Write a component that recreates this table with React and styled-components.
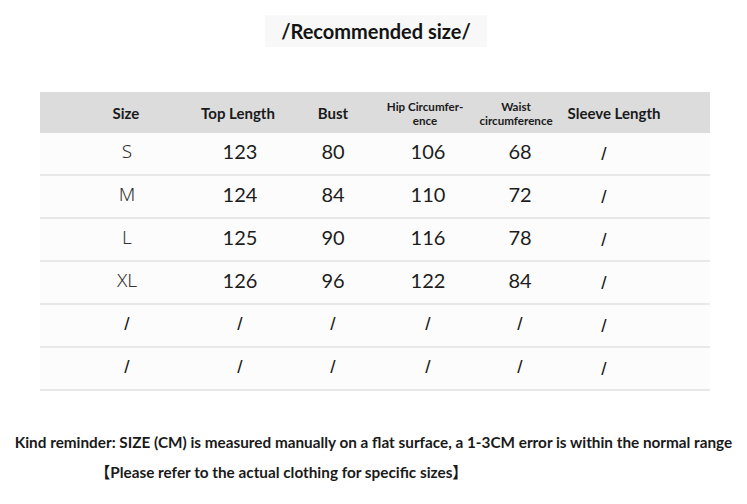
import styled, { createGlobalStyle } from "styled-components";

const GlobalStyle = createGlobalStyle`
  body {
    margin: 0;
    background: #ffffff;
    font-family: Lato, "Noto Sans CJK SC", sans-serif;
    color: #1d1d1d;
  }
`;

const Page = styled.div`
  width: 747px;
  padding-top: 15px;
`;

const TitleBox = styled.div`
  width: 222px;
  height: 32px;
  margin: 0 auto 0 265px;
  background: #f8f8f8;
  display: flex;
  align-items: center;
  justify-content: center;
  font-size: 20px;
  font-weight: 700;
  color: #141414;
`;

const Table = styled.div`
  width: 670px;
  margin: 45px 0 0 40px;
`;

const HeaderRow = styled.div`
  display: grid;
  grid-template-columns: 112px 112px 78px 106px 76px 120px 1fr;
  padding-left: 30px;
  height: 41px;
  align-items: center;
  justify-items: center;
  background: #dcdcdc;
`;

const HeadCell = styled.div`
  font-size: ${(p) => (p.$small ? "11.6px" : "15px")};
  line-height: ${(p) => (p.$small ? "14px" : "18px")};
  font-weight: 700;
  text-align: center;
  white-space: nowrap;
  color: #1a1a1a;
  margin-top: ${(p) => (p.$small ? "3px" : "1px")};
`;

const Row = styled.div`
  display: grid;
  grid-template-columns: 114px 112px 74px 116px 68px 100px 1fr;
  padding-left: 30px;
  height: 41px;
  align-items: center;
  justify-items: center;
  background: #fcfcfc;
  border-bottom: 2px solid #e8e8e8;
`;

const Cell = styled.div`
  font-size: 20px;
  font-weight: 400;
  color: #1d1d1d;
  margin-top: -6px;
`;

const SizeCell = styled(Cell)`
  font-family: "Noto Sans", sans-serif;
  font-weight: 300;
  font-size: 19px;
  color: #333;
`;

const Slash = styled(Cell)`
  font-family: "Liberation Sans", sans-serif;
  font-weight: 400;
  font-size: 19px;
  color: #161616;
  margin-top: -4px;
`;

const SleeveSlash = styled(Slash)`
  margin-top: 0;
`;

const Footer = styled.div`
  margin-top: 42px;
`;

const Note = styled.div`
  font-size: 15.3px;
  font-weight: 700;
  line-height: 19px;
  white-space: nowrap;
  color: #1a1a1a;
  text-align: ${(p) => (p.$indent ? "left" : "center")};
  padding-left: ${(p) => (p.$indent ? "95px" : "0")};
  margin-top: ${(p) => (p.$indent ? "11px" : "0")};
`;

const rows = [
  ["S", "123", "80", "106", "68"],
  ["M", "124", "84", "110", "72"],
  ["L", "125", "90", "116", "78"],
  ["XL", "126", "96", "122", "84"],
  ["/", "/", "/", "/", "/"],
  ["/", "/", "/", "/", "/"],
];

export default function App() {
  return (
    <Page>
      <GlobalStyle />
      <TitleBox>/Recommended size/</TitleBox>
      <Table>
        <HeaderRow>
          <HeadCell>Size</HeadCell>
          <HeadCell>Top Length</HeadCell>
          <HeadCell>Bust</HeadCell>
          <HeadCell $small>
            Hip Circumfer-
            <br />
            ence
          </HeadCell>
          <HeadCell $small>
            Waist
            <br />
            circumference
          </HeadCell>
          <HeadCell>Sleeve Length</HeadCell>
        </HeaderRow>
        {rows.map((r, i) => (
          <Row key={i}>
            {r.map((v, j) => {
              if (v === "/") return <Slash key={j}>/</Slash>;
              if (j === 0) return <SizeCell key={j}>{v}</SizeCell>;
              return <Cell key={j}>{v}</Cell>;
            })}
            <SleeveSlash>/</SleeveSlash>
          </Row>
        ))}
      </Table>
      <Footer>
        <Note>
          Kind reminder: SIZE (CM) is measured manually on a flat surface, a
          1-3CM error is within the normal range
        </Note>
        <Note $indent>【Please refer to the actual clothing for specific sizes】</Note>
      </Footer>
    </Page>
  );
}
